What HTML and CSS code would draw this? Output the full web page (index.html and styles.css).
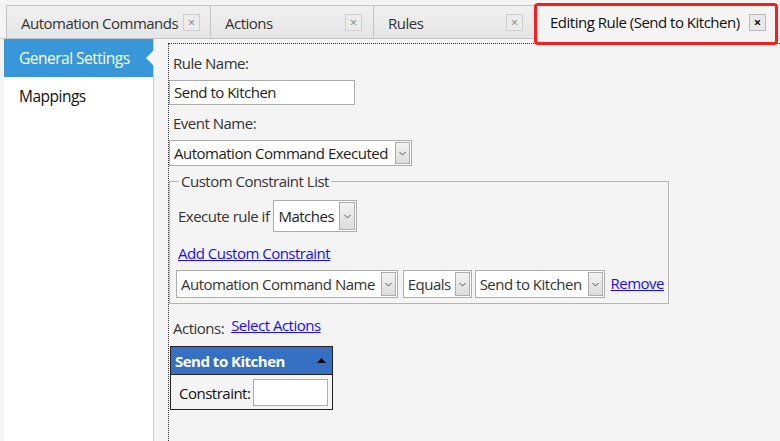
FILE: index.html
```html
<!DOCTYPE html>
<html>
<head>
<meta charset="utf-8">
<link rel="stylesheet" href="styles.css">
</head>
<body>
<div class="tabbar">
  <div class="tab tab-1"><span class="tab-title">Automation Commands</span><span class="close">×</span></div>
  <div class="tab tab-2"><span class="tab-title">Actions</span><span class="close">×</span></div>
  <div class="tab tab-3"><span class="tab-title">Rules</span><span class="close">×</span></div>
  <div class="tab tab-active"><span class="tab-title">Editing Rule (Send to Kitchen)</span><span class="close close-active">×</span></div>
  <div class="highlight"></div>
</div>
<div class="main">
  <div class="sidebar">
    <div class="nav-item selected">General Settings<span class="notch"></span></div>
    <div class="nav-item">Mappings</div>
  </div>
  <div class="content">
    <div class="label first">Rule Name:</div>
    <div class="textbox name-box">Send to Kitchen</div>
    <div class="label event-label">Event Name:</div>
    <div class="select event-select"><span class="sel-text">Automation Command Executed</span><span class="sel-btn"><svg width="7" height="5" viewBox="0 0 7 5"><path d="M0.5 1 L3.5 4 L6.5 1" fill="none" stroke="#555" stroke-width="1"/></svg></span></div>
    <fieldset class="group">
      <legend>Custom Constraint List</legend>
      <div class="exec-row">
        <span class="exec-label">Execute rule if</span>
        <div class="select match-select"><span class="sel-text">Matches</span><span class="sel-btn"><svg width="7" height="5" viewBox="0 0 7 5"><path d="M0.5 1 L3.5 4 L6.5 1" fill="none" stroke="#555" stroke-width="1"/></svg></span></div>
      </div>
      <a class="link add-link">Add Custom Constraint</a>
      <div class="constraint-row">
        <div class="select c-name"><span class="sel-text">Automation Command Name</span><span class="sel-btn"><svg width="7" height="5" viewBox="0 0 7 5"><path d="M0.5 1 L3.5 4 L6.5 1" fill="none" stroke="#555" stroke-width="1"/></svg></span></div>
        <div class="select c-op"><span class="sel-text">Equals</span><span class="sel-btn"><svg width="7" height="5" viewBox="0 0 7 5"><path d="M0.5 1 L3.5 4 L6.5 1" fill="none" stroke="#555" stroke-width="1"/></svg></span></div>
        <div class="select c-val"><span class="sel-text">Send to Kitchen</span><span class="sel-btn"><svg width="7" height="5" viewBox="0 0 7 5"><path d="M0.5 1 L3.5 4 L6.5 1" fill="none" stroke="#555" stroke-width="1"/></svg></span></div>
        <a class="link remove-link">Remove</a>
      </div>
    </fieldset>
    <div class="actions-row">
      <span class="actions-label">Actions:</span>
      <a class="link select-actions">Select Actions</a>
    </div>
    <div class="expander">
      <div class="exp-head"><span>Send to Kitchen</span><svg width="9" height="5" viewBox="0 0 9 5"><path d="M0 5 L4.5 0 L9 5 Z" fill="#000"/></svg></div>
      <div class="exp-body"><span>Constraint:</span><div class="textbox small-box"></div></div>
    </div>
  </div>
</div>
</body>
</html>
```
FILE: styles.css
```css
html, body {
  margin: 0;
  padding: 0;
  height: 100%;
  overflow: hidden;
}
body {
  background: #f4f4f4;
  font-family: "Open Sans", "Noto Sans", sans-serif;
  font-size: 15px;
  letter-spacing: -0.5px;
  color: #1e1e1e;
}
.tabbar {
  position: relative;
  display: flex;
  padding: 5px 0 0 6px;
  height: 33px;
  border-bottom: 1px solid #c9c9c9;
}
.tab {
  display: flex;
  align-items: center;
  justify-content: space-between;
  box-sizing: border-box;
  height: 34px;
  padding: 1px 11px 0 14px;
  background: linear-gradient(#f0f0f0, #e5e5e5);
  border: 1px solid #c4c4c4;
  border-right: none;
  color: #333;
  font-size: 15px;
}
.tab-1 { width: 204px; padding-right: 10px; }
.tab-2 { width: 163px; }
.tab-3 { width: 161px; }
.tab-active {
  width: 243px;
  background: #f4f4f4;
  border-right: 1px solid #c4c4c4;
  border-bottom: 1px solid #f4f4f4;
  padding: 0 10px 0 15px;
  color: #111;
  height: 34px;
}
.close {
  display: inline-flex;
  align-items: center;
  justify-content: center;
  width: 15px;
  height: 15px;
  border: 1px solid #cfcfcf;
  background: #ececec;
  color: #888;
  font-size: 13px;
  line-height: 1;
  letter-spacing: 0;
}
.close-active {
  color: #111;
  font-weight: bold;
  background: #e9e9e9;
  border-color: #bbb;
}
.highlight {
  position: absolute;
  left: 534px;
  top: 3px;
  width: 244px;
  height: 42px;
  box-sizing: border-box;
  border: 3px solid #f81e1e;
  border-radius: 4px;
}
.main {
  display: flex;
  height: calc(100% - 39px);
}
.sidebar {
  width: 149px;
  margin-left: 4px;
  background: #fff;
  border-right: 1px solid #cfcfcf;
}
.nav-item {
  position: relative;
  height: 38px;
  line-height: 38px;
  padding-left: 15px;
  font-size: 15.5px;
  color: #111;
}
.nav-item.selected {
  background: #3897d9;
  color: #fff;
}
.notch {
  position: absolute;
  right: -1px;
  top: 11px;
  width: 0;
  height: 0;
  border-top: 8px solid transparent;
  border-bottom: 8px solid transparent;
  border-right: 8px solid #f4f4f4;
}
.content {
  flex: 1;
  margin: 4px 0 0 14px;
  border-top: 1px dotted #333;
  border-left: 1px dotted #333;
  display: flex;
  flex-direction: column;
  align-items: flex-start;
}
.label {
  margin: 6px 0 0 4px;
  height: 22px;
  line-height: 22px;
  color: #333;
}
.label.first { margin-top: 8px; }
.textbox {
  box-sizing: border-box;
  background: #fff;
  border: 1px solid #acacac;
}
.name-box {
  margin-top: 6px;
  width: 186px;
  height: 25px;
  line-height: 23px;
  padding-left: 4px;
  color: #222;
}
.event-label { margin-top: 7px; }
.select {
  display: flex;
  align-items: stretch;
  box-sizing: border-box;
  background: #fff;
  border: 1px solid #acacac;
  padding: 1px;
}
.sel-text {
  flex: 1;
  padding-left: 3px;
  white-space: nowrap;
  display: flex;
  align-items: center;
}
.sel-btn {
  width: 13px;
  display: flex;
  align-items: center;
  justify-content: center;
  background: linear-gradient(#f2f2f2, #dcdcdc);
  border: 1px solid #adadad;
  margin-left: 2px;
}
.event-select {
  margin-top: 6px;
  width: 243px;
  height: 26px;
}
.group {
  margin: 5px 0 0 0;
  width: 500px;
  box-sizing: border-box;
  border: 1px solid #b5b5b5;
  padding: 9px 4px 5px 6px;
  min-inline-size: 0;
}
.group legend {
  padding: 0 2px;
  margin-left: 3px;
  color: #333;
}
.exec-row {
  display: flex;
  align-items: center;
}
.exec-label { margin-left: 2px; margin-right: 4px; color: #333; }
.match-select {
  width: 84px;
  height: 32px;
}
.match-select .sel-btn { width: 14px; }
.link {
  color: #1a0dff;
  text-decoration: underline;
  cursor: pointer;
}
.add-link {
  display: block;
  margin: 11px 0 0 2px;
}
.constraint-row {
  display: flex;
  align-items: center;
  margin-top: 7px;
}
.c-name { width: 222px; height: 28px; color: #333; }
.c-op { width: 69px; height: 28px; margin-left: 5px; color: #333; }
.c-val { width: 131px; height: 28px; margin-left: 3px; color: #333; }
.remove-link { margin-left: 5px; margin-top: -2px; }
.actions-row {
  display: flex;
  align-items: flex-end;
  margin: 14px 0 0 4px;
}
.actions-label { color: #333; margin-right: 7px; }
.select-actions { position: relative; top: -3px; }
.expander {
  margin: 8px 0 0 1px;
  width: 163px;
  box-sizing: border-box;
  border: 1px solid #222;
}
.exp-head {
  background: #3670c3;
  color: #fff;
  font-weight: bold;
  height: 27px;
  display: flex;
  align-items: center;
  justify-content: space-between;
  padding: 0 6px 0 4px;
  border-bottom: 1px solid #222;
}
.exp-body {
  display: flex;
  align-items: center;
  padding: 4px 4px 3px 8px;
}
.exp-body span { margin-right: 3px; color: #111; }
.small-box {
  width: 75px;
  height: 27px;
}
```
